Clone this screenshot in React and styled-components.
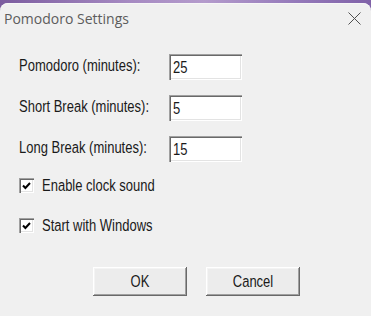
import React from "react";
import styled, { createGlobalStyle } from "styled-components";

const GlobalStyle = createGlobalStyle`
  html, body {
    margin: 0;
    padding: 0;
    background: #f0f0f0;
  }
  body {
    font-family: "Liberation Sans", Arial, sans-serif;
  }
`;

const Desktop = styled.div`
  width: 371px;
  height: 316px;
  overflow: hidden;
  padding-top: 3px;
  box-sizing: border-box;
  background: linear-gradient(90deg, #7c5c9f 0%, #a68ac2 35%, #b49bcc 55%, #9479ba 80%, #8062a8 100%);
`;

const Window = styled.div`
  height: 313px;
  background: #f0f0f0;
  border-radius: 8px 8px 0 0;
  box-shadow: inset 0 1px 0 #f7f7f7;
  display: flex;
  flex-direction: column;
`;

const TitleBar = styled.div`
  height: 30px;
  display: flex;
  align-items: center;
  justify-content: space-between;
  padding: 0 10px 0 4px;
`;

const Title = styled.span`
  font-family: "Open Sans", "Noto Sans", sans-serif;
  font-size: 14px;
  color: #5c5c5c;
`;

const CloseButton = styled.div`
  width: 13px;
  height: 13px;
  display: flex;
  align-items: center;
  justify-content: center;
`;

const Content = styled.div`
  padding: 21px 0 0 19px;
  display: flex;
  flex-direction: column;
`;

const Text = styled.span`
  display: inline-block;
  font-family: "Liberation Sans", Arial, sans-serif;
  font-size: 13px;
  color: #1a1a1a;
  transform: scaleY(${(p) => p.$stretch || 1.22});
  white-space: nowrap;
`;

const FieldRow = styled.div`
  display: flex;
  align-items: center;
  height: 26px;
  margin-bottom: 15px;
`;

const FieldLabel = styled.div`
  width: 150px;
  padding-bottom: 5px;
`;

const TextBox = styled.div`
  width: 73px;
  height: 26px;
  box-sizing: border-box;
  background: #fff;
  padding: 4px 0 0 4px;
  box-shadow: inset 1px 1px #a0a0a0, inset 2px 2px #696969, inset -1px -1px #fff,
    inset -2px -2px #e3e3e3;
`;

const CheckRow = styled.label`
  display: flex;
  align-items: center;
  gap: 8px;
  height: 15px;
  margin-top: ${(p) => p.$top}px;
`;

const CheckBox = styled.span`
  width: 15px;
  height: 15px;
  box-sizing: border-box;
  background: #fff;
  display: flex;
  align-items: center;
  justify-content: center;
  box-shadow: inset 1px 1px #a0a0a0, inset 2px 2px #696969, inset -1px -1px #fff,
    inset -2px -2px #e3e3e3;
`;

const ButtonRow = styled.div`
  display: flex;
  gap: 19px;
  margin: 34px 0 0 74px;
`;

const Button = styled.button`
  width: 94px;
  height: 29px;
  border: none;
  padding: 0;
  background: #ececec;
  box-shadow: inset -1px -1px #696969, inset 1px 1px #fff, inset -2px -2px #a0a0a0,
    inset 2px 2px #f4f4f4;
  display: flex;
  align-items: center;
  justify-content: center;
  cursor: default;
`;

const fields = [
  { label: "Pomodoro (minutes):", value: "25" },
  { label: "Short Break (minutes):", value: "5" },
  { label: "Long Break (minutes):", value: "15" },
];

const options = [
  { label: "Enable clock sound", top: 1 },
  { label: "Start with Windows", top: 25 },
];

const CheckMark = () => (
  <svg width="9" height="8" viewBox="0 0 9 8">
    <path d="M1 3.5 L3.4 6 L8 1" fill="none" stroke="#000" strokeWidth="2" />
  </svg>
);

const App = () => {
  return (
    <>
      <GlobalStyle />
      <Desktop>
        <Window>
          <TitleBar>
            <Title>Pomodoro Settings</Title>
            <CloseButton>
              <svg width="13" height="13" viewBox="0 0 13 13">
                <path d="M0.5 0.5 L12.5 12.5 M12.5 0.5 L0.5 12.5" stroke="#505050" strokeWidth="1" />
              </svg>
            </CloseButton>
          </TitleBar>
          <Content>
            {fields.map((f) => (
              <FieldRow key={f.label}>
                <FieldLabel>
                  <Text>{f.label}</Text>
                </FieldLabel>
                <TextBox>
                  <Text $stretch={1.25}>{f.value}</Text>
                </TextBox>
              </FieldRow>
            ))}
            {options.map((o) => (
              <CheckRow key={o.label} $top={o.top}>
                <CheckBox>
                  <CheckMark />
                </CheckBox>
                <Text>{o.label}</Text>
              </CheckRow>
            ))}
            <ButtonRow>
              <Button>
                <Text>OK</Text>
              </Button>
              <Button>
                <Text>Cancel</Text>
              </Button>
            </ButtonRow>
          </Content>
        </Window>
      </Desktop>
    </>
  );
};

export default App;
